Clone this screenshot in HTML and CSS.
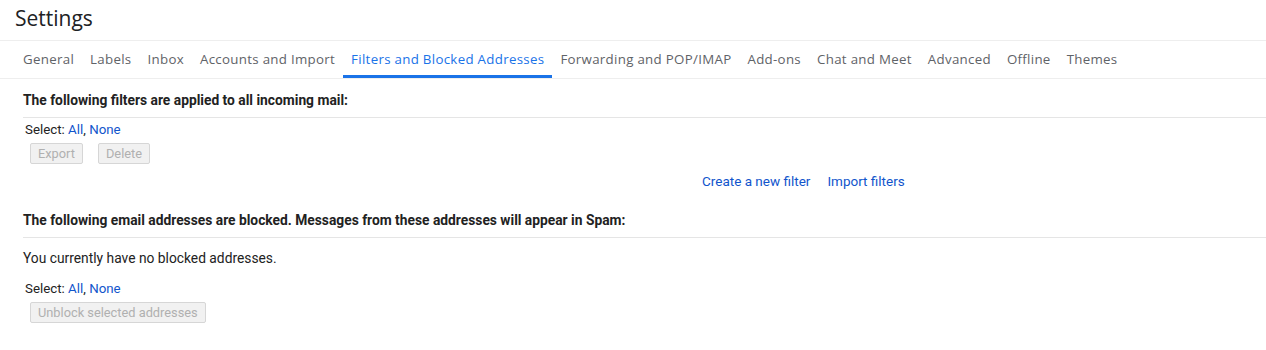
FILE: index.html
```html
<!DOCTYPE html>
<html lang="en">

<head>
    <meta charset="UTF-8">
    <meta name="viewport" content="width=device-width, initial-scale=1.0">
    <title>Settings</title>
    <link rel="stylesheet" href="styles.css">
</head>

<body>
    <h1 class="title">Settings</h1>

    <!-- Tabs -->
    <div class="tabs">
        <a class="tab">General</a>
        <a class="tab">Labels</a>
        <a class="tab">Inbox</a>
        <a class="tab">Accounts and Import</a>
        <a class="tab active">Filters and Blocked Addresses</a>
        <a class="tab">Forwarding and POP/IMAP</a>
        <a class="tab">Add-ons</a>
        <a class="tab">Chat and Meet</a>
        <a class="tab">Advanced</a>
        <a class="tab">Offline</a>
        <a class="tab">Themes</a>
    </div>

    <div class="content">
        <!-- Filters -->
        <div class="section-title">The following filters are applied to all incoming mail:</div>
        <div class="select">Select: <a>All</a>, <a>None</a></div>
        <div class="actions">
            <button class="btn" disabled>Export</button>
            <button class="btn" disabled>Delete</button>
        </div>
        <div class="filter-links">
            <a>Create a new filter</a>
            <a>Import filters</a>
        </div>

        <!-- Blocked -->
        <div class="section-title">The following email addresses are blocked. Messages from these addresses will appear in Spam:</div>
        <p class="empty">You currently have no blocked addresses.</p>
        <div class="select">Select: <a>All</a>, <a>None</a></div>
        <div class="actions">
            <button class="btn" disabled>Unblock selected addresses</button>
        </div>
    </div>
</body>

</html>
```

FILE: styles.css
```css
body {
    margin: 0;
    font-family: Roboto, "Liberation Sans", Arial, sans-serif;
    font-size: 13.8px;
    line-height: 16px;
    color: #222;
    background: white;
}

a {
    color: #1155cc;
    cursor: pointer;
    text-decoration: none;
}

.title {
    margin: 0;
    padding: 4px 0 0 15px;
    height: 36px;
    line-height: 28px;
    font-family: "Open Sans", sans-serif;
    font-size: 21px;
    font-weight: normal;
    color: #202124;
    border-bottom: 1px solid #eeeeee;
}

.tabs {
    display: flex;
    padding-left: 15px;
    border-bottom: 1px solid #eeeeee;
    height: 37px;
}

.tab {
    font-family: "Open Sans", sans-serif;
    font-size: 13.3px;
    font-weight: 500;
    letter-spacing: 0.3px;
    color: #5f6368;
    padding: 10px 8px 0;
    box-sizing: border-box;
    height: 37px;
    border-bottom: 3px solid transparent;
    white-space: nowrap;
}

.tab.active {
    color: #1a73e8;
    border-bottom-color: #1a73e8;
}

.content {
    padding-left: 23px;
}

.section-title {
    font-weight: bold;
    padding: 13px 0 9px;
    border-bottom: 1px solid #e5e5e5;
}

.select {
    padding: 4px 0 0 2px;
    font-size: 13.3px;
}

.actions {
    display: flex;
    gap: 15px;
    margin-top: 5px;
    padding-left: 7px;
}

.btn {
    font-family: Roboto, "Liberation Sans", Arial, sans-serif;
    font-size: 12.8px;
    color: #b0b0b0;
    background: #f1f1f1;
    border: 1px solid #d6d6d6;
    border-radius: 2px;
    height: 21px;
    padding: 0 7px;
}

.filter-links {
    display: flex;
    gap: 17px;
    font-size: 13.5px;
    padding: 9px 0 10px 679px;
}

.empty {
    margin: 12px 0 11px;
}
```
